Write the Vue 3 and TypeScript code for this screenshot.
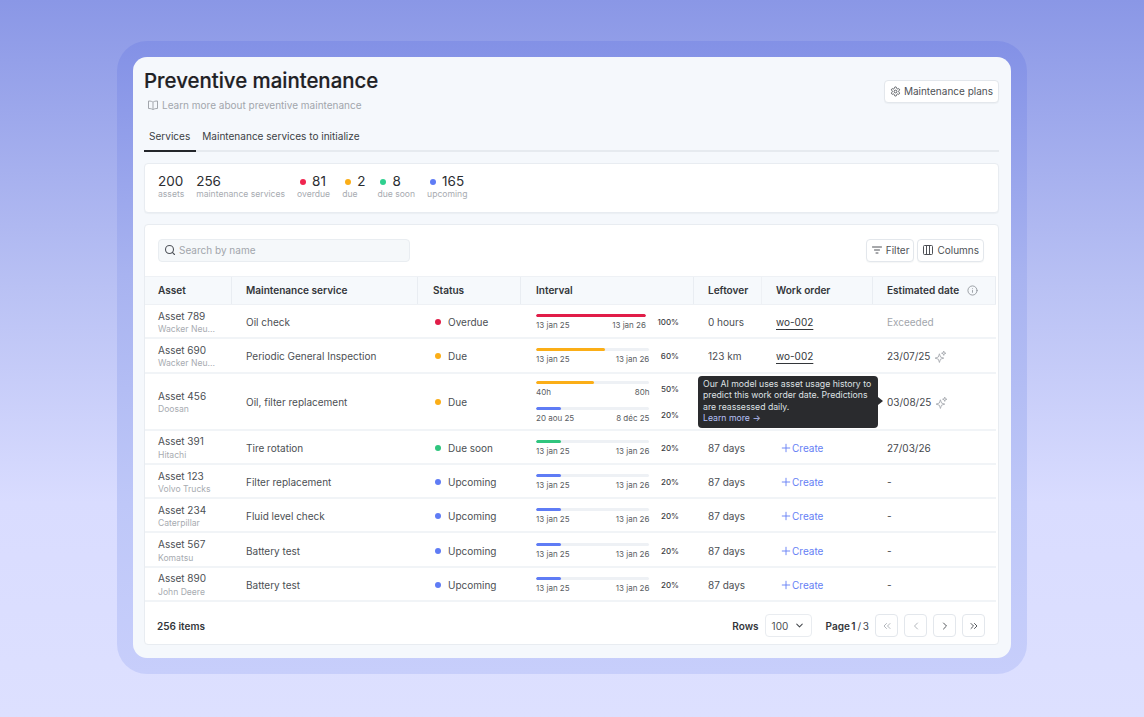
<script setup lang="ts">
interface Bar { color: string; fill: number; pct: number; from: string; to: string }
interface Row {
  name: string; maker: string; service: string; status: string; dot: string;
  bars: Bar[]; left: string; wo: string; date: string; dateMuted?: boolean; ai?: boolean; tall?: boolean
}
const red = '#e11d48', amber = '#fbae17', green = '#2fc57e', blue = '#5f7cf5'
const std = (color: string, pct: number, fill: number): Bar => ({ color, pct, fill, from: '13 jan 25', to: '13 jan 26' })
const rows: Row[] = [
  { name: 'Asset 789', maker: 'Wacker Neu...', service: 'Oil check', status: 'Overdue', dot: red, bars: [std(red, 100, 100)], left: '0 hours', wo: 'wo-002', date: 'Exceeded', dateMuted: true },
  { name: 'Asset 690', maker: 'Wacker Neu...', service: 'Periodic General Inspection', status: 'Due', dot: amber, bars: [std(amber, 60, 61)], left: '123 km', wo: 'wo-002', date: '23/07/25', ai: true },
  { name: 'Asset 456', maker: 'Doosan', service: 'Oil, filter replacement', status: 'Due', dot: amber, bars: [{ color: amber, pct: 50, fill: 51, from: '40h', to: '80h' }, { color: blue, pct: 20, fill: 22, from: '20 aou 25', to: '8 déc 25' }], left: '', wo: '', date: '03/08/25', ai: true, tall: true },
  { name: 'Asset 391', maker: 'Hitachi', service: 'Tire rotation', status: 'Due soon', dot: green, bars: [std(green, 20, 22)], left: '87 days', wo: '', date: '27/03/26' },
  { name: 'Asset 123', maker: 'Volvo Trucks', service: 'Filter replacement', status: 'Upcoming', dot: blue, bars: [std(blue, 20, 22)], left: '87 days', wo: '', date: '-' },
  { name: 'Asset 234', maker: 'Caterpillar', service: 'Fluid level check', status: 'Upcoming', dot: blue, bars: [std(blue, 20, 22)], left: '87 days', wo: '', date: '-' },
  { name: 'Asset 567', maker: 'Komatsu', service: 'Battery test', status: 'Upcoming', dot: blue, bars: [std(blue, 20, 22)], left: '87 days', wo: '', date: '-' },
  { name: 'Asset 890', maker: 'John Deere', service: 'Battery test', status: 'Upcoming', dot: blue, bars: [std(blue, 20, 22)], left: '87 days', wo: '', date: '-' },
]
const stats = [
  { n: '200', l: 'assets' },
  { n: '256', l: 'maintenance services' },
  { n: '81', l: 'overdue', dot: '#f0254f' },
  { n: '2', l: 'due', dot: amber },
  { n: '8', l: 'due soon', dot: '#2fd08f' },
  { n: '165', l: 'upcoming', dot: blue },
]
</script>

<template>
  <div class="page">
    <div class="frame">
      <main class="panel">
        <header class="top">
          <div>
            <h1>Preventive maintenance</h1>
            <div class="learn">
              <svg width="12" height="12" viewBox="0 0 24 24" fill="none" stroke="currentColor" stroke-width="2"><path d="M12 6.500C10.500 5 8 4 3 4v15c5 0 7.500 1 9 2.500 1.500-1.500 4-2.500 9-2.500V4c-5 0-7.500 1-9 2.500zM12 6.500v15" stroke-linejoin="round"/></svg>
              <span>Learn more about preventive maintenance</span>
            </div>
          </div>
          <button class="btn plans">
            <svg width="11" height="11" viewBox="0 0 24 24" fill="none" stroke="currentColor" stroke-width="2" stroke-linejoin="round"><path d="M12.200 2h-.400a2 2 0 0 0-2 2v.200a2 2 0 0 1-1 1.700l-.400.300a2 2 0 0 1-2 0l-.200-.100a2 2 0 0 0-2.700.700l-.200.400a2 2 0 0 0 .700 2.700l.200.100a2 2 0 0 1 1 1.700v.500a2 2 0 0 1-1 1.700l-.200.100a2 2 0 0 0-.700 2.700l.200.400a2 2 0 0 0 2.700.700l.200-.100a2 2 0 0 1 2 0l.400.300a2 2 0 0 1 1 1.700v.200a2 2 0 0 0 2 2h.400a2 2 0 0 0 2-2v-.200a2 2 0 0 1 1-1.700l.400-.300a2 2 0 0 1 2 0l.200.100a2 2 0 0 0 2.700-.700l.200-.400a2 2 0 0 0-.700-2.700l-.200-.100a2 2 0 0 1-1-1.700v-.500a2 2 0 0 1 1-1.700l.200-.100a2 2 0 0 0 .700-2.700l-.200-.400a2 2 0 0 0-2.700-.700l-.200.100a2 2 0 0 1-2 0l-.400-.300a2 2 0 0 1-1-1.700V4a2 2 0 0 0-2-2z"/><circle cx="12" cy="12" r="3"/></svg>
            Maintenance plans
          </button>
        </header>

        <nav class="tabs">
          <span class="tab active">Services</span>
          <span class="tab">Maintenance services to initialize</span>
        </nav>

        <section class="card stats">
          <div v-for="s in stats" :key="s.l" class="stat">
            <div class="num"><i v-if="s.dot" class="sdot" :style="{ background: s.dot }"></i>{{ s.n }}</div>
            <div class="lab">{{ s.l }}</div>
          </div>
        </section>

        <section class="card tablecard">
          <div class="toolbar">
            <div class="search">
              <svg width="12" height="12" viewBox="0 0 24 24" fill="none" stroke="#50545a" stroke-width="2.200" stroke-linecap="round"><circle cx="11" cy="11" r="8"/><path d="m21 21-4.300-4.300"/></svg>
              <span>Search by name</span>
            </div>
            <div class="tools">
              <button class="btn tool">
                <svg width="12" height="12" viewBox="0 0 24 24" fill="none" stroke="currentColor" stroke-width="2" stroke-linecap="round"><path d="M3 6h18M7 12h10M10 18h4"/></svg>
                Filter
              </button>
              <button class="btn tool">
                <svg width="12" height="12" viewBox="0 0 24 24" fill="none" stroke="currentColor" stroke-width="2" stroke-linejoin="round"><rect x="3" y="3" width="18" height="18" rx="2"/><path d="M9 3v18M15 3v18"/></svg>
                Columns
              </button>
            </div>
          </div>

          <div class="grid head">
            <div class="th">Asset</div>
            <div class="th">Maintenance service</div>
            <div class="th">Status</div>
            <div class="th">Interval</div>
            <div class="th">Leftover</div>
            <div class="th">Work order</div>
            <div class="th">Estimated date
              <svg class="info" width="11" height="11" viewBox="0 0 24 24" fill="none" stroke="#8b8f95" stroke-width="1.800" stroke-linecap="round"><circle cx="12" cy="12" r="10"/><path d="M12 16v-4M12 8h.010"/></svg>
            </div>
          </div>

          <div v-for="r in rows" :key="r.name" class="grid row" :class="{ tall: r.tall }">
            <div class="td asset"><div class="aname">{{ r.name }}</div><div class="amaker">{{ r.maker }}</div></div>
            <div class="td">{{ r.service }}</div>
            <div class="td status"><i class="dot" :style="{ background: r.dot }"></i>{{ r.status }}</div>
            <div class="td interval">
              <div v-for="b in r.bars" :key="b.from" class="ibar">
                <div class="ileft">
                  <div class="track"><div class="fill" :style="{ width: b.fill + '%', background: b.color }"></div></div>
                  <div class="idates"><span>{{ b.from }}</span><span>{{ b.to }}</span></div>
                </div>
                <span class="pct">{{ b.pct }}%</span>
              </div>
            </div>
            <div class="td">{{ r.left }}</div>
            <div class="td">
              <a v-if="r.wo" class="wo">{{ r.wo }}</a>
              <a v-else-if="!r.tall" class="create"><svg width="10" height="10" viewBox="0 0 24 24" fill="none" stroke="currentColor" stroke-width="2.200" stroke-linecap="round"><path d="M12 3v18M3 12h18"/></svg>Create</a>
            </div>
            <div class="td est" :class="{ muted: r.dateMuted }">
              {{ r.date }}
              <svg v-if="r.ai" width="13" height="13" viewBox="0 0 24 24" fill="none" stroke="#a0a4aa" stroke-width="1.500" stroke-linejoin="round"><path d="M10 7 12 13 18 15 12 17 10 23 8 17 2 15 8 13z"/><path d="M18 2l1 3 3 1-3 1-1 3-1-3-3-1 3-1z"/></svg>
            </div>
            <div v-if="r.tall" class="tooltip">
              Our AI model uses asset usage history to predict this work order date. Predictions are reassessed daily.
              <a>Learn more →</a>
            </div>
          </div>

          <footer class="foot">
            <b class="items">256 items</b>
            <div class="pager">
              <b>Rows</b>
              <div class="select">100
                <svg width="11" height="11" viewBox="0 0 24 24" fill="none" stroke="#43464b" stroke-width="2.200" stroke-linecap="round" stroke-linejoin="round"><path d="m6 9 6 6 6-6"/></svg>
              </div>
              <span class="pageinfo"><b>Page 1</b> / 3</span>
              <div class="pbtns">
                <button class="pb dim"><svg width="12" height="12" viewBox="0 0 24 24" fill="none" stroke="currentColor" stroke-width="2" stroke-linecap="round" stroke-linejoin="round"><path d="m11 17-5-5 5-5M18 17l-5-5 5-5"/></svg></button>
                <button class="pb dim"><svg width="12" height="12" viewBox="0 0 24 24" fill="none" stroke="currentColor" stroke-width="2" stroke-linecap="round" stroke-linejoin="round"><path d="m15 18-6-6 6-6"/></svg></button>
                <button class="pb"><svg width="12" height="12" viewBox="0 0 24 24" fill="none" stroke="currentColor" stroke-width="2" stroke-linecap="round" stroke-linejoin="round"><path d="m9 18 6-6-6-6"/></svg></button>
                <button class="pb"><svg width="12" height="12" viewBox="0 0 24 24" fill="none" stroke="currentColor" stroke-width="2" stroke-linecap="round" stroke-linejoin="round"><path d="m6 17 5-5-5-5M13 17l5-5-5-5"/></svg></button>
              </div>
            </div>
          </footer>
        </section>
      </main>
    </div>
  </div>
</template>

<style>
html, body { margin: 0; padding: 0; }
</style>

<style scoped>
* { box-sizing: border-box; }
.page {
  width: 1144px; height: 717px; overflow: hidden;
  padding: 41px 117px 43px;
  background: linear-gradient(180deg, #8a97e6 0%, #b9c1f4 40%, #d9dcff 70%, #dde0ff 100%);
  font-family: Inter, "Liberation Sans", sans-serif;
  color: #44474c;
}
.frame {
  height: 633px; padding: 16px; border-radius: 30px;
  background: linear-gradient(180deg, #8391e6 0%, #a8b3f0 37%, #bec7f8 73%, #c7cefb 100%);
}
.panel {
  height: 601px; border-radius: 14px; background: #f5f8fc;
  padding: 11px 12px 13px 11px; display: flex; flex-direction: column;
}
.top { display: flex; justify-content: space-between; align-items: flex-start; height: 57px; }
h1 { margin: 0; font-size: 20.400px; line-height: 26px; font-weight: 500; color: #1f2124; -webkit-text-stroke: 0.2px #1f2124; }
.learn { display: flex; align-items: center; gap: 3px; margin-top: 3.500px; padding-left: 3px; font-size: 10px; line-height: 14px; color: #a2a6ac; }
.btn {
  display: inline-flex; align-items: center; gap: 3px; height: 23px; padding: 0 5px;
  background: #fff; border: 1px solid #e3e7ec; border-radius: 4px;
  font: 10px Inter, sans-serif; color: #4e5156; box-shadow: 0 1px 1px rgba(30,40,60,.04);
}
.btn.tool { padding: 0 4px; }
.plans { margin-top: 11.500px; }
.tabs { display: flex; height: 26px; border-bottom: 2px solid #e6eaef; margin-top: 1px; }
.tab { padding: 0 6px; line-height: 20px; font-size: 10.050px; color: #3c3f44; height: 26px; }
.tab.active { border-bottom: 2px solid #23262a; padding: 0 6px 0 5px; }
.card { background: #fff; border: 1px solid #e8ecf1; border-radius: 4px; }
.stats { display: flex; height: 50px; margin-top: 11px; padding: 10px 13px; gap: 12px; box-shadow: 0 1px 1px rgba(30,40,60,.04); flex: none; }
.stat { display: flex; flex-direction: column; align-items: flex-start; }
.num { font-size: 13.500px; line-height: 15px; color: #2b2d31; display: flex; align-items: center; }
.lab { font-size: 8.600px; line-height: 10px; color: #a7abb1; }
.sdot { width: 6px; height: 6px; border-radius: 50%; margin: 0 6px 0 3px; }
.tablecard { flex: 1; margin-top: 11px; display: flex; flex-direction: column; padding-right: 2px; }
.toolbar { height: 50.500px; flex: none; display: flex; justify-content: space-between; align-items: center; padding: 0 12px 0 13px; }
.search {
  width: 252px; height: 23px; display: flex; align-items: center; gap: 3px; padding: 0 5px;
  background: #f5f8fa; border: 1px solid #e9edf1; border-radius: 4px; font-size: 10px; color: #a2a6ac;
}
.tools { display: flex; gap: 3px; }
.grid { display: grid; grid-template-columns: 87px 186px 103px 173px 68px 111px 123px; position: relative; }
.head { height: 29.500px; background: #f6f9fc; border-top: 1px solid #eef1f5; border-bottom: 1px solid #eef1f5; flex: none; }
.th { font-size: 10.050px; font-weight: 600; color: #33363a; padding-left: 14px; display: flex; align-items: center; gap: 8px; border-right: 1px solid #e9edf2; }
.th:first-child { padding-left: 13px; }
.th:nth-child(3), .th:nth-child(4) { padding-left: 15px; }
.th:nth-child(5) { border-right: 1px solid #eef1f5; }
.row { height: 34.300px; box-shadow: inset 0 -2px 0 #f1f4f7; flex: none; }
.row.tall { height: 57px; }
.td { padding-left: 14px; font-size: 10px; color: #4c4f54; display: flex; align-items: center; min-width: 0; }
.asset { flex-direction: column; align-items: flex-start; justify-content: center; padding: 2px 0 0 13px; }
.aname { line-height: 13.500px; }
.amaker { font-size: 8.600px; line-height: 13.500px; color: #a7abb1; white-space: nowrap; }
.status { padding-left: 17px; gap: 7px; }
.dot { width: 6px; height: 6px; border-radius: 50%; }
.interval { flex-direction: column; align-items: stretch; justify-content: center; gap: 10px; padding: 0 15px; }
.ibar { display: flex; align-items: center; gap: 11.500px; }
.ileft { flex: 1; }
.track { height: 3px; border-radius: 2px; background: #eef1f5; overflow: hidden; }
.fill { height: 100%; border-radius: 2px; }
.idates { display: flex; justify-content: space-between; font-size: 8px; line-height: 10px; margin-top: 3px; color: #5a5d62; }
.pct { font-size: 8px; font-weight: 500; color: #3d4045; }
.wo { color: #33363a; text-decoration: underline; text-underline-offset: 3px; }
.create { color: #6580f5; display: flex; align-items: center; gap: 1px; padding-left: 5px; }
.est { gap: 4px; color: #44474c; }
.est.muted { color: #a2a6ac; }
.tooltip {
  position: absolute; left: 553px; top: 2px; width: 180px; height: 52px; padding: 3px 5px;
  background: #2a2b2e; border-radius: 4px; color: #dfe1e4; font-size: 8.700px; line-height: 11.500px;
}
.tooltip::after {
  content: ""; position: absolute; right: -5px; top: 21px;
  border-left: 5px solid #2a2b2e; border-top: 4px solid transparent; border-bottom: 4px solid transparent;
}
.tooltip a { display: block; color: #b6c0f7; }
.foot { flex: 1; display: flex; justify-content: space-between; align-items: center; padding: 5px 11px 0 12px; font-size: 10px; }
.foot b { font-weight: 600; color: #33363a; }
.pager { display: flex; align-items: center; }
.select {
  width: 47px; height: 23px; margin-left: 6px; padding: 0 6px; display: flex; justify-content: space-between; align-items: center;
  border: 1px solid #e9ecf0; border-radius: 4px; color: #4c4f54;
}
.pageinfo { margin-left: 14px; white-space: nowrap; word-spacing: -1px; }
.pbtns { display: flex; gap: 6px; margin-left: 6px; }
.pb { width: 23px; height: 23px; padding: 0; display: flex; align-items: center; justify-content: center; background: #fff; border: 1px solid #e3e7ec; border-radius: 4px; color: #55585d; }
.pb.dim { color: #b3b7bc; }
</style>
